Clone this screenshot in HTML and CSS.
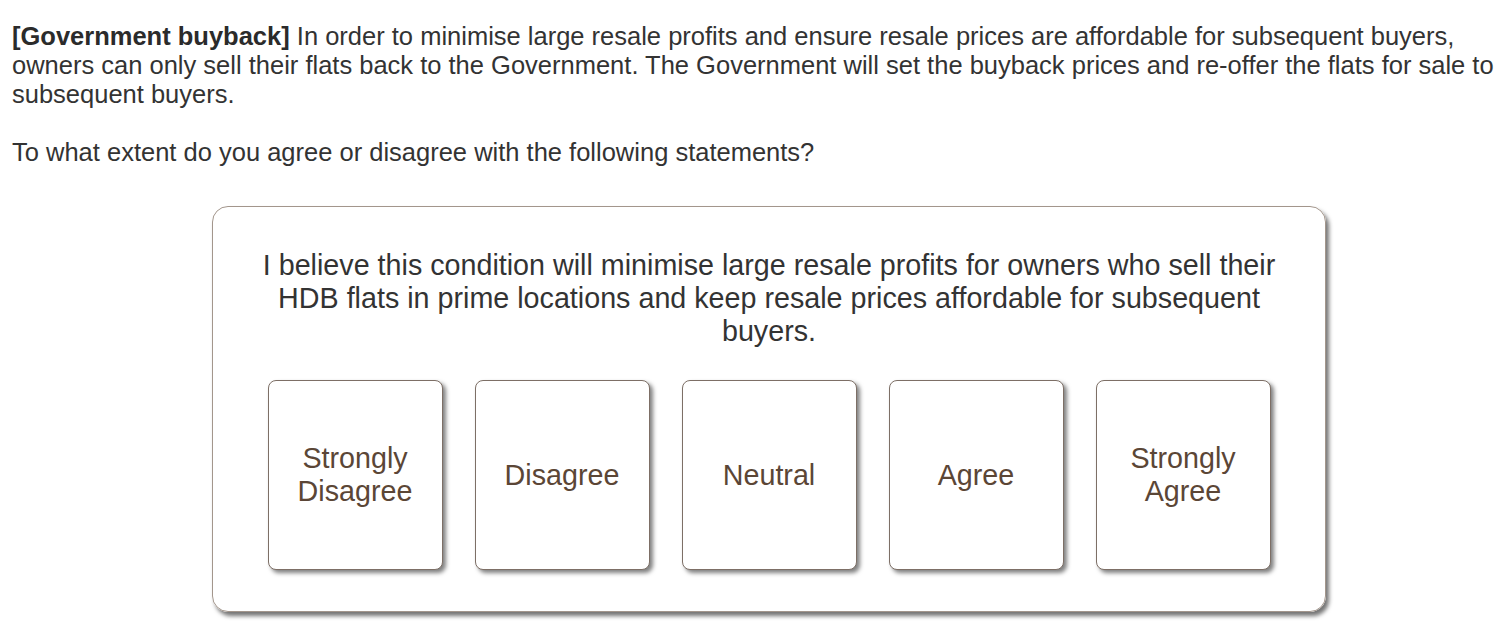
FILE: index.html
```html
<!DOCTYPE html>
<html lang="en">
<head>
  <meta charset="UTF-8" />
  <title>Government buyback</title>
  <meta name="viewport" content="width=device-width, initial-scale=1.0"/>
  <link rel="stylesheet" href="styles.css">
</head>
<body>

<div class="intro">
  <b>[Government buyback]</b> In order to minimise large resale profits and ensure resale prices are affordable for subsequent buyers, owners can only sell their flats back to the Government. The Government will set the buyback prices and re-offer the flats for sale to subsequent buyers.<br><br>To what extent do you agree or disagree with the following statements?
</div>

<div class="card">
  <div class="statement">I believe this condition will minimise large resale profits for owners who sell their HDB flats in prime locations and keep resale prices affordable for subsequent buyers.</div>
  <div class="choices">
    <button class="choice">Strongly<br>Disagree</button>
    <button class="choice">Disagree</button>
    <button class="choice">Neutral</button>
    <button class="choice">Agree</button>
    <button class="choice">Strongly<br>Agree</button>
  </div>
</div>

</body>
</html>
```

FILE: styles.css
```css
body { margin: 0; padding: 22px 4px 22px 12px; background: #fff; font-family: "Liberation Sans", Arial, sans-serif; color: #333; }
.intro { font-size: 25.5px; line-height: 29px; }
.intro b { color: #2b2b2b; }
.card { margin: 39px 0 0 200px; width: 1114px; box-sizing: border-box; padding: 42px 45px 41px; border: 1.5px solid #a3968c; border-radius: 16px; box-shadow: 3px 4px 4px rgba(0,0,0,0.55); }
.statement { font-size: 28.7px; line-height: 33px; text-align: center; color: #333; }
.choices { display: flex; justify-content: center; gap: 32px; margin-top: 32px; }
.choice { width: 175px; height: 190px; padding: 0; background: #fff; border: 1px solid #7d6f66; border-radius: 8px; box-shadow: 3px 3px 4px rgba(0,0,0,0.5); font-family: "Liberation Sans", Arial, sans-serif; font-size: 28.7px; line-height: 33px; color: #5b4636; cursor: pointer; }
```
